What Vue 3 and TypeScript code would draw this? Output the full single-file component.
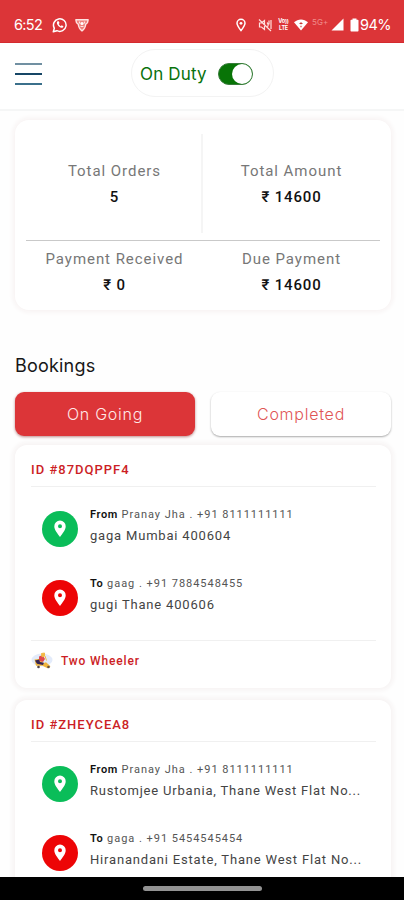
<script setup lang="ts">
interface Stop {
  kind: 'From' | 'To'
  contact: string
  address: string
}
interface Booking {
  id: string
  stops: Stop[]
  vehicle?: string
}

const totals = [
  { label: 'Total Orders', value: '5' },
  { label: 'Total Amount', value: '₹ 14600' },
  { label: 'Payment Received', value: '₹ 0' },
  { label: 'Due Payment', value: '₹ 14600' },
]

const bookings: Booking[] = [
  {
    id: '87DQPPF4',
    stops: [
      { kind: 'From', contact: 'Pranay Jha . +91 8111111111', address: 'gaga Mumbai 400604' },
      { kind: 'To', contact: 'gaag . +91 7884548455', address: 'gugi Thane 400606' },
    ],
    vehicle: 'Two Wheeler',
  },
  {
    id: 'ZHEYCEA8',
    stops: [
      { kind: 'From', contact: 'Pranay Jha . +91 8111111111', address: 'Rustomjee Urbania, Thane West Flat No...' },
      { kind: 'To', contact: 'gaga . +91 5454545454', address: 'Hiranandani Estate, Thane West Flat No...' },
    ],
  },
]
</script>

<template>
  <div class="phone">
    <div class="status">
      <span class="clock">6:52</span>
      <svg class="whatsapp" viewBox="0 0 16 16" width="16" height="16">
        <path d="M1.3 14.7l1-3.5A6.3 6.3 0 1 1 4.9 13.700z" fill="none" stroke="#fff" stroke-width="1.5" stroke-linejoin="round" />
        <path d="M5.500 4.300c-.9.7-.8 2 0 3.400 1 1.700 2.500 2.900 4.100 3.100 1 .1 1.900-.6 1.800-1.500L9.700 8.300l-.9.9C7.900 8.800 7.100 8 6.700 7l.8-.9-.8-1.800z" fill="#fff" />
      </svg>
      <svg class="shield" viewBox="0 0 14 14" width="14" height="14">
        <path d="M1 1.800h12c.2 2-.9 3.800-2.300 4.500C10.500 9 9 11.500 7 12.800 5 11.500 3.500 9 3.300 6.300 1.900 5.600.8 3.800 1 1.800z" fill="#ef7f7b" stroke="#ffe4e2" stroke-width="1.400" />
        <path d="M4.500 3.500v2M9.500 3.500v2M5.500 8.500h3" stroke="#ffe4e2" stroke-width="1.200" />
        <circle cx="7" cy="5.500" r="1.600" fill="#fff" />
      </svg>
      <span class="grow"></span>
      <svg class="pin" viewBox="0 0 12 14" width="12" height="14">
        <path d="M6 12.600C3.600 9.500 2 7.500 2 5.300a4 4 0 0 1 8 0c0 2.200-1.600 4.200-4 7.300z" fill="none" stroke="#fff" stroke-width="1.500" />
        <circle cx="6" cy="5.300" r="1.400" fill="#fff" />
      </svg>
      <svg class="mute" viewBox="0 0 14 14" width="14" height="14" fill="none" stroke="#ffe0de" stroke-width="1.200">
        <path d="M1.500 5v4h2l3 2.500v-9L3.500 5zM9 4.500c1.300 1.400 1.300 3.600 0 5M11 2.500v4M13 2v9M1 1.500l12 11.500" />
      </svg>
      <span class="volte"><span>Vo))</span><span>LTE</span></span>
      <svg class="wifi" viewBox="0 0 14 12" width="14" height="12">
        <path d="M0 3.300C4-.6 10-.6 14 3.300L7 11.500z" fill="#fff" />
        <path d="M7 3.300v2M7 6.700v1.500M5.500 4.500h3" stroke="#c93432" stroke-width="1.100" />
      </svg>
      <span class="net">5G+</span>
      <svg class="signal" viewBox="0 0 13 13" width="13" height="13"><path d="M12.500.5v12H.5z" fill="#fff" /></svg>
      <svg class="battery" viewBox="0 0 9 14" width="9" height="14">
        <path d="M2.500.5h4v1.300h1.300c.4 0 .7.300.7.700v10.300c0 .4-.3.700-.7.700H1.200c-.4 0-.7-.3-.7-.7V2.500c0-.4.3-.7.7-.7h1.300z" fill="#fff" />
      </svg>
      <span class="percent">94%</span>
    </div>

    <header class="topbar">
      <button class="menu" aria-label="Menu"><i></i><i></i><i></i></button>
      <div class="duty">
        <span>On Duty</span>
        <span class="toggle"><span class="knob"></span></span>
      </div>
    </header>

    <main class="content">
      <section class="summary">
        <div v-for="t in totals" :key="t.label" class="total">
          <span class="label">{{ t.label }}</span>
          <span class="value">{{ t.value }}</span>
        </div>
      </section>

      <h2>Bookings</h2>
      <div class="tabs">
        <button class="tab active"><span>On Going</span></button>
        <button class="tab"><span>Completed</span></button>
      </div>

      <article v-for="b in bookings" :key="b.id" class="booking">
        <div class="id">ID #{{ b.id }}</div>
        <div class="stops">
          <div v-for="s in b.stops" :key="s.kind" class="stop">
            <span class="marker" :class="s.kind.toLowerCase()">
              <svg viewBox="0 0 12 18" width="12" height="18">
                <path fill-rule="evenodd" d="M6 .5A5.700 5.700 0 0 0 .3 6.200C.3 10 3.600 13.500 6 17c2.400-3.500 5.700-7 5.700-10.800A5.700 5.700 0 0 0 6 .5zm0 3.700a2 2 0 1 1 0 4 2 2 0 0 1 0-4z" fill="#fff" />
              </svg>
            </span>
            <div class="where">
              <div class="contact"><b>{{ s.kind }}</b> {{ s.contact }}</div>
              <div class="address">{{ s.address }}</div>
            </div>
          </div>
        </div>
        <div v-if="b.vehicle" class="vehicle">
          <svg viewBox="0 0 22 18" width="22" height="18">
            <ellipse cx="11" cy="8" rx="10.500" ry="6.500" fill="#e3ebfa" />
            <path d="M3.500 7.500l6-.8 2.500 4.500 3-1 4.500 4-3 2-5-2.500H5z" fill="#efb53e" />
            <path d="M8 4.500l3.500-1.500 2.500 4-2 3-4-1.500z" fill="#e04a4d" />
            <path d="M10.500 1.500l3-.5v3l-2.500.8zM14 4l1.500 4.500" fill="#f3ba45" stroke="#f3ba45" />
            <path d="M4 8.500l4-1 1 2.500 4 .8-1 2.200-6-1.200z" fill="#352554" />
            <circle cx="7.500" cy="15" r="1.300" fill="#514347" /><circle cx="17.500" cy="15" r="1.300" fill="#66503c" />
          </svg>
          <span>{{ b.vehicle }}</span>
        </div>
      </article>
    </main>

    <footer class="navbar"><span class="handle"></span></footer>
  </div>
</template>

<style>
body { margin: 0; background: #fff; }
</style>

<style scoped>
* { box-sizing: border-box; }
.phone { width: 404px; height: 900px; display: flex; flex-direction: column; overflow: hidden; background: #fefefe; font-family: Roboto, "Noto Sans", sans-serif; white-space: nowrap; }
button { border: 0; padding: 0; background: none; font: inherit; }
svg { display: block; flex: none; }

.status { flex: none; height: 43px; padding: 7px 13px 0 14px; display: flex; align-items: center; background: #dc3538; border-bottom: 1px solid #d42a2e; color: #fff; font-family: Inter, sans-serif; }
.clock { width: 38px; font-size: 14.500px; letter-spacing: -.7px; }
.shield { margin-left: 7px; }
.grow { flex: 1; }
.mute { margin-left: 11px; }
.volte { width: 13px; margin-left: 5px; display: flex; flex-direction: column; align-items: center; font-size: 5.500px; font-weight: 700; line-height: 7px; letter-spacing: -.2px; }
.wifi { margin-left: 4px; }
.net { width: 17px; margin-left: 4px; padding-bottom: 6px; font-size: 8px; letter-spacing: .1px; color: #f08c8a; }
.signal { margin-left: 2px; }
.battery { margin-left: 6px; }
.percent { width: 31px; margin-left: 1px; font-size: 14.500px; letter-spacing: -.5px; }

.topbar { flex: none; height: 68px; padding-left: 15px; display: flex; align-items: flex-start; border-bottom: 2px solid #f5f6f6; background: #fff; }
.menu { width: 27px; height: 22px; margin-top: 20px; display: flex; flex-direction: column; justify-content: space-between; }
.menu i { height: 2px; background: #3b708b; }
.menu i:first-child { background: #7190a2; }
.menu i:nth-child(2) { background: #164666; }
.duty { width: 143px; height: 48px; margin: 6px 0 0 89px; padding: 1px 20px 0 8px; display: flex; align-items: center; justify-content: space-between; border: 1px solid #f3f3f3; border-radius: 24px; color: #08720c; font: 17px Inter, sans-serif; letter-spacing: .15px; }
.toggle { width: 35px; height: 22px; display: flex; justify-content: flex-end; border: 1px solid #387c3a; border-radius: 11px; background: #087407; }
.knob { width: 20px; height: 20px; border-radius: 50%; background: #fff; }

.content { flex: 1; min-height: 0; padding: 9px 13px 0 15px; overflow: hidden; }
.summary { height: 190px; padding: 0 11px; display: grid; grid-template-columns: 177px 177px; grid-template-rows: 121px 69px; border-radius: 14px; background: #fff; box-shadow: 0 0 5px 2px #f7f2f2; }
.total { display: flex; flex-direction: column; align-items: center; gap: 6px; line-height: 20px; padding-top: 8px; }
.total:nth-child(-n+2) { padding-top: 41px; border-bottom: 1px solid #c9c9c9; }
.total:first-child { background: linear-gradient(#f5f5f5, #f5f5f5) right 14px / 2px 99px no-repeat; }
.label { font-size: 15px; letter-spacing: .95px; color: #777; }
.value { font-size: 15px; font-weight: 500; letter-spacing: .85px; color: #111; }

h2 { margin: 44px 0 0; font: 18px/24px Inter, sans-serif; letter-spacing: .2px; color: #171717; }
.tabs { margin-top: 14px; display: grid; grid-template-columns: 180px 180px; gap: 16px; }
.tab { height: 44px; border-radius: 9px; background: #fff; box-shadow: 0 1px 2px #aaa; color: #df5555; font: 300 16px Inter, sans-serif; letter-spacing: .75px; }
.active { background: #dc3538; color: #ffe9e8; box-shadow: 0 1px 3px #b88; }

.booking { height: 243px; margin-top: 12px; padding: 0 15px 0 16px; border-radius: 12px; background: #fff; box-shadow: 0 0 4px 3px #f7f4f4; }
.tabs + .booking { margin-top: 9px; }
.id { height: 42px; padding-top: 15px; border-bottom: 1px solid #f0f0f0; font-size: 13px; font-weight: 500; line-height: 20px; letter-spacing: 1px; color: #cc1e25; }
.stops { height: 154px; padding: 18px 0 0 12px; border-bottom: 1px solid #f0f0f0; }
.stop { height: 69px; display: flex; align-items: flex-start; }
.marker { width: 36px; height: 36px; margin: 6px 0 0 -1px; display: grid; place-items: center; border-radius: 50%; background: #0abd59; }
.marker.to { background: #ed0506; }
.where { margin-left: 12px; padding-top: 2px; }
.contact { height: 16px; font-size: 11px; line-height: 16px; letter-spacing: .97px; color: #555; }
.contact b { color: #111; font-weight: 600; letter-spacing: .6px; }
.address { margin-top: 3px; font-size: 13px; line-height: 20px; letter-spacing: .81px; color: #444; }
.vehicle { height: 40px; display: flex; align-items: center; gap: 8px; font-size: 12px; font-weight: 500; letter-spacing: .85px; color: #cc1e25; }

.navbar { flex: none; height: 23px; display: flex; justify-content: center; padding-top: 9px; background: #000; }
.handle { width: 119px; height: 5px; border-radius: 3px; background: #929292; }
</style>
